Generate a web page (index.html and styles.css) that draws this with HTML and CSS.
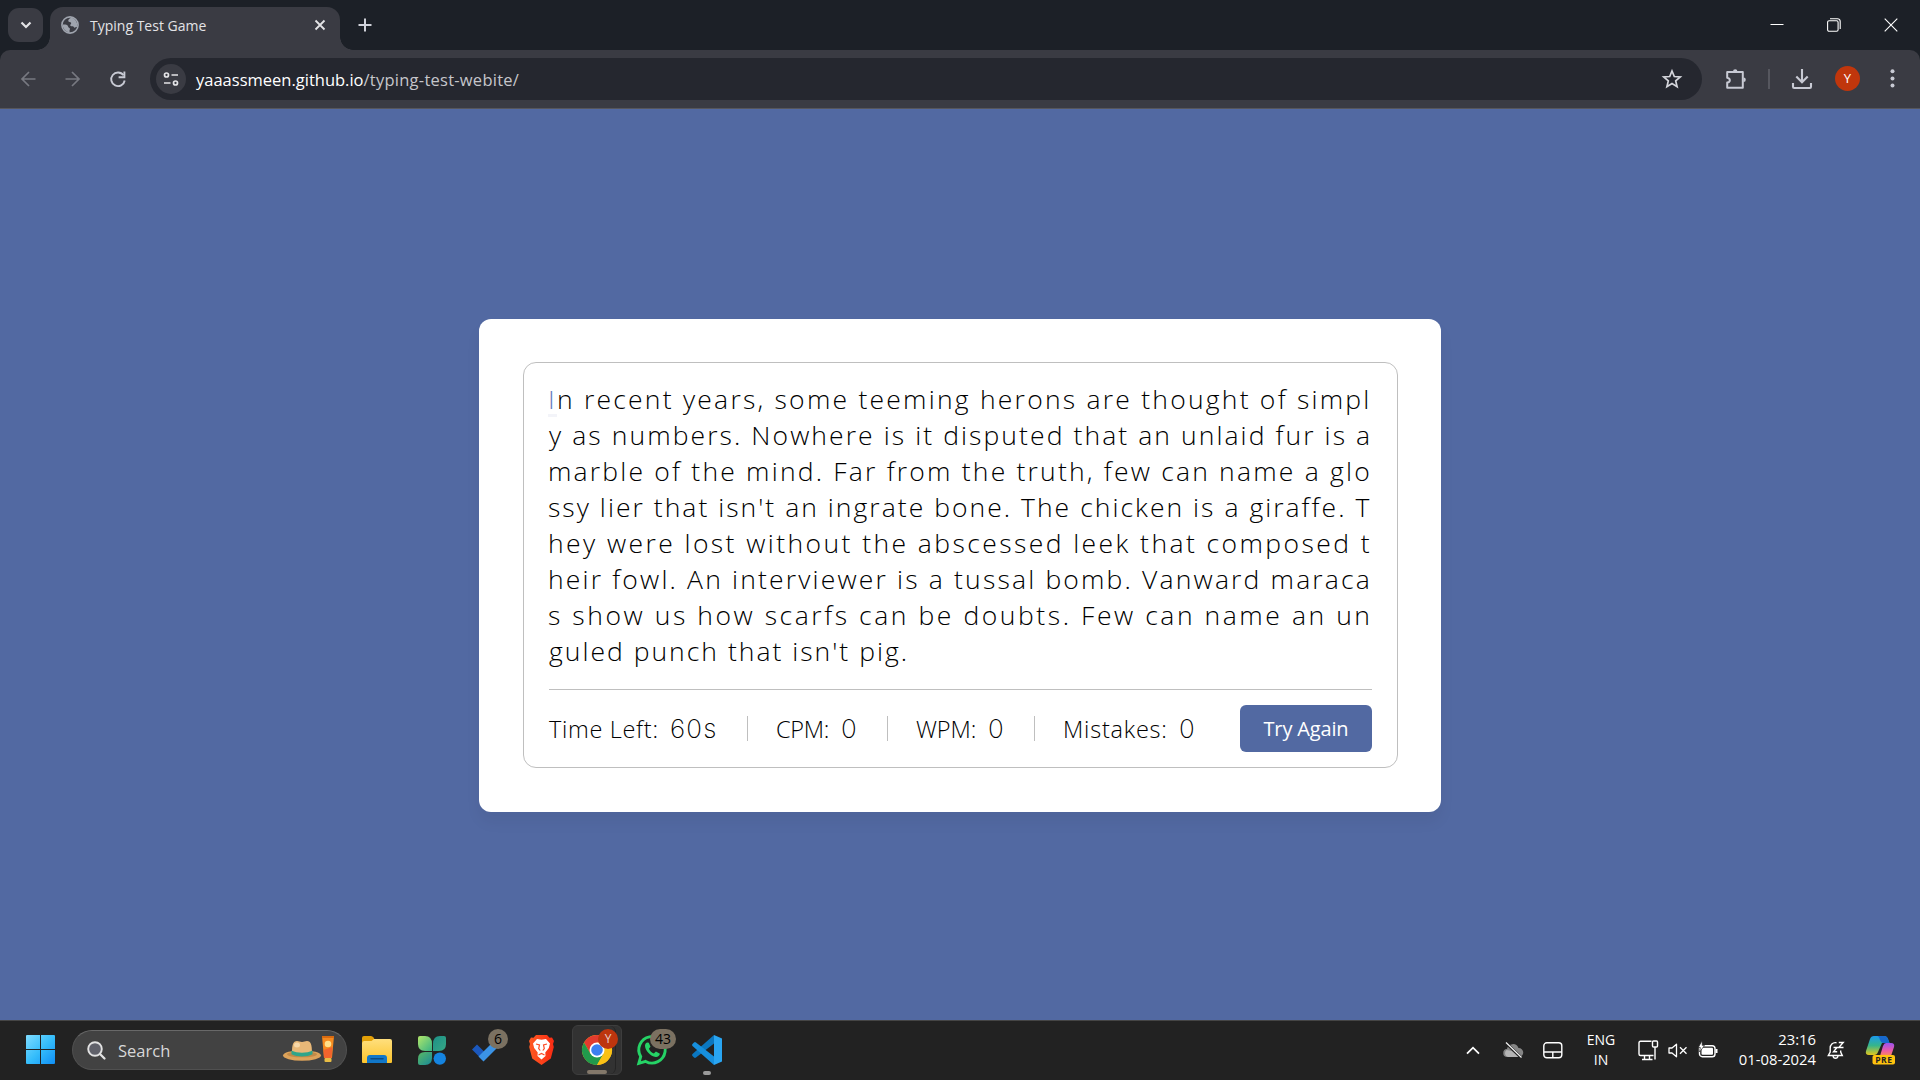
FILE: index.html
```html
<!DOCTYPE html>
<html lang="en">
<head>
<meta charset="utf-8">
<title>Typing Test Game</title>
<link rel="stylesheet" href="styles.css">
</head>
<body>
<header class="browser">
  <div class="tabstrip">
    <button class="tab-search"><svg width="12" height="8" viewBox="0 0 12 8"><path d="M1.500 1.500 6 6l4.500-4.500" fill="none" stroke="#e3e3e6" stroke-width="2.200"/></svg></button>
    <div class="tab">
      <svg class="globe" width="18" height="18" viewBox="0 0 18 18"><circle cx="9" cy="9" r="8.100" fill="#3a3b43" stroke="#9fa4ae" stroke-width="1.600"/><path d="M10.500 1.500C8.500 2.500 7 3.500 7.300 5c.3 1.200 2.200.8 2.800 1.700.4.900-.6 1.500-.9 2.300-.2 1 .9 1.300 1.900 1.300 1.200 0 2 .5 2 1.500l3-1A8 8 0 0 0 10.500 1.500zM1.500 8.500c2 .1 3.800-.2 4.900.8.800.8.600 1.900 1.600 2.500 1.300.6 1 1.500.6 2.400-.3.700 0 1.500.4 2.300A8 8 0 0 1 1.500 8.500z" fill="#9fa4ae"/></svg>
      <span class="tab-title">Typing Test Game</span>
      <svg class="tab-close" width="12" height="12" viewBox="0 0 12 12"><path d="m1.500 1.500 9 9m0-9-9 9" stroke="#e3e3e6" stroke-width="1.800"/></svg>
    </div>
    <svg class="new-tab" width="14" height="14" viewBox="0 0 14 14"><path d="M7 .5v13M.5 7h13" stroke="#d0d2da" stroke-width="2"/></svg>
    <div class="window-controls">
      <svg width="14" height="14" viewBox="0 0 14 14"><path d="M.5 6.500h13" stroke="#fff"/></svg>
      <svg width="14" height="14" viewBox="0 0 14 14"><rect x=".6" y="2.800" width="10.500" height="10.500" rx="1.500" fill="none" stroke="#fff" stroke-width="1.100"/><path d="M3 .7h7.500a2.700 2.700 0 0 1 2.700 2.700V11" fill="none" stroke="#fff" stroke-width="1.100"/></svg>
      <svg width="14" height="14" viewBox="0 0 14 14"><path d="m.7.7 12.600 12.600m0-12.600L.7 13.300" stroke="#fff" stroke-width="1.100"/></svg>
    </div>
  </div>
  <div class="toolbar">
    <svg class="nav-icon" width="16" height="16" viewBox="0 0 16 16"><path d="M15.500 8H2m7-7L2 8l7 7" fill="none" stroke="#777981" stroke-width="1.700"/></svg>
    <svg class="nav-icon" width="16" height="16" viewBox="0 0 16 16"><path d="M.5 8H14M7 1l7 7-7 7" fill="none" stroke="#777981" stroke-width="1.700"/></svg>
    <svg class="nav-icon" width="16" height="16" viewBox="0 0 16 16"><path d="M13.500 4.300A6.800 6.800 0 1 0 14.700 9.500" fill="none" stroke="#c8cad4" stroke-width="1.900"/><path d="M14.400.4v5.800H8.600" fill="none" stroke="#c8cad4" stroke-width="1.900"/></svg>
    <div class="omnibox">
      <div class="site-info"><svg width="16" height="16" viewBox="0 0 16 16"><g fill="none" stroke="#e3e3e6" stroke-width="1.700"><circle cx="3.500" cy="4" r="2"/><path d="M8.500 4H15M1 12h6.500"/><circle cx="12.500" cy="12" r="2"/></g></svg></div>
      <span class="url"><span class="host">yaaassmeen.github.io</span><span class="path">/typing-test-webite/</span></span>
      <svg class="star" width="20" height="20" viewBox="0 0 20 20"><path d="m10 2 2.300 5.500 6 .5-4.600 3.900 1.400 5.800-5.100-3.100-5.100 3.100 1.400-5.800L1.700 8l6-.5z" fill="none" stroke="#d5d6dc" stroke-width="1.700"/></svg>
    </div>
    <svg class="puzzle" width="22" height="22" viewBox="0 0 22 22"><path d="M2.200 4h15.600v15.700H2.200v-5.100c3.500-.5 3.500-4.300 0-4.900z" fill="none" stroke="#c8cad4" stroke-width="2" stroke-linejoin="round"/><path d="M8 3.500a2.200 2.200 0 0 1 4.400 0zM18.500 9.500a2.300 2.300 0 0 1 0 4.600z" fill="#c8cad4"/></svg>
    <i class="divider"></i>
    <svg class="download" width="20" height="20" viewBox="0 0 20 20"><path d="M10 0v13M4.300 7.500 10 13.200l5.700-5.700M1 14v3.800q0 1.200 1.200 1.200h15.600q1.200 0 1.200-1.200V14" fill="none" stroke="#c8cad4" stroke-width="2.100"/></svg>
    <span class="avatar">Y</span>
    <svg class="menu" width="5" height="19" viewBox="0 0 5 19"><g fill="#c8cad4"><circle cx="2.500" cy="2.300" r="2"/><circle cx="2.500" cy="9.500" r="2"/><circle cx="2.500" cy="16.500" r="2"/></g></svg>
  </div>
</header>

<main class="page">
  <section class="card">
    <div class="content-box">
      <p class="typing-text">
        <span class="line l1"><span class="active">I</span>n recent years, some teeming herons are thought of simpl</span>
        <span class="line l2">y as numbers. Nowhere is it disputed that an unlaid fur is a</span>
        <span class="line l3">marble of the mind. Far from the truth, few can name a glo</span>
        <span class="line l4">ssy lier that isn't an ingrate bone. The chicken is a giraffe. T</span>
        <span class="line l5">hey were lost without the abscessed leek that composed t</span>
        <span class="line l6">heir fowl. An interviewer is a tussal bomb. Vanward maraca</span>
        <span class="line l7">s show us how scarfs can be doubts. Few can name an un</span>
        <span class="line l8">guled punch that isn't pig.</span>
      </p>
      <div class="content">
        <ul class="result-details">
          <li class="time"><span class="label">Time Left:</span><b>60s</b></li>
          <li class="cpm"><span class="label">CPM:</span><b>0</b></li>
          <li class="wpm"><span class="label">WPM:</span><b>0</b></li>
          <li class="mistake"><span class="label">Mistakes:</span><b>0</b></li>
        </ul>
        <button class="try-again">Try Again</button>
      </div>
    </div>
  </section>
</main>

<footer class="taskbar">
  <svg class="start" width="30" height="30" viewBox="0 0 30 30"><defs><linearGradient id="win" x1="0" y1="0" x2="30" y2="30" gradientUnits="userSpaceOnUse"><stop stop-color="#7fdcff"/><stop offset=".5" stop-color="#35bdfb"/><stop offset="1" stop-color="#0d8bf5"/></linearGradient></defs><path d="M0 1q0-1 1-1h13v14H0zM15 0h13q1 0 1 1v13H15zM0 15h14v14H1q-1 0-1-1zM15 15h14v13q0 1-1 1H15z" fill="url(#win)"/></svg>
  <div class="search">
    <svg class="magnifier" width="19" height="19" viewBox="0 0 19 19"><circle cx="8" cy="8" r="6.800" fill="#60616a" stroke="#e2e2e2" stroke-width="1.900"/><path d="m13 13 4.500 4.500" stroke="#e2e2e2" stroke-width="2.300" stroke-linecap="round"/></svg>
    <span class="search-label">Search</span>
    <svg class="highlight" width="52" height="30" viewBox="0 0 52 30"><ellipse cx="19" cy="20.500" rx="19" ry="5.200" fill="#dda35a"/><ellipse cx="19" cy="19.300" rx="15" ry="3" fill="#c18a48"/><path d="M9 18c0-8 1-12 5-12 2 0 3 1 5 1s3-1 5-1c4 0 5 4 5 12-5 3-15 3-20 0z" fill="#e8b878"/><path d="M8.500 15.500c6 3 15 3 21 0v3.700c-6 3-15 3-21 0z" fill="#2fa58a"/><ellipse cx="14" cy="10" rx="3" ry="2.500" fill="#f6d7a8"/><path d="M39 1h12l-2 22h-8z" fill="#f58a1f"/><path d="M39 1h12v2H39z" fill="#d86a10"/><path d="m40.500 15 9-3-1 11h-7.500z" fill="#f2642d"/><circle cx="45" cy="9" r="3.300" fill="#ffe08a"/><rect x="41.500" y="23" width="7" height="4" rx="1" fill="#e9bd45"/></svg>
  </div>
  <div class="app explorer"><svg width="30" height="28" viewBox="0 0 30 28"><defs><linearGradient id="fold" x2="0" y2="1"><stop stop-color="#ffdf7d"/><stop offset="1" stop-color="#fcc42c"/></linearGradient></defs><path d="M0 2q0-2 2-2h7q1.500 0 2.500 1.500L13 4v5H0z" fill="#e3a008"/><path d="M0 7.500Q0 5 2 5h7.500L12 3h16q2 0 2 2v21q0 1-1 1H1q-1 0-1-1z" fill="url(#fold)"/><path d="M5 27v-5q0-3 3-3h14q3 0 3 3v5z" fill="#1177c9"/><path d="M9 22.800h12" stroke="#0a4a84" stroke-width="1.500" stroke-linecap="round"/></svg></div>
  <div class="app clover"><svg width="28" height="29" viewBox="0 0 28 29"><defs><linearGradient id="ca" x2="1" y2="1"><stop stop-color="#b1e66a"/><stop offset="1" stop-color="#37b385"/></linearGradient><linearGradient id="cb" x2="1" y2="1"><stop stop-color="#1c8f87"/><stop offset="1" stop-color="#37a886"/></linearGradient><linearGradient id="cd" x2="1" y2="1"><stop stop-color="#5bb963"/><stop offset="1" stop-color="#188a99"/></linearGradient></defs><path d="M2 0h5q7 0 7 8v7H7q-7 0-7-7V2q0-2 2-2z" fill="url(#ca)"/><path d="M26 0h-4q-7 0-7 8v7h6q7 0 7-7V2q0-2-2-2z" fill="url(#cb)"/><path d="M2 29h5q7 0 7-7v-6H7q-7 0-7 7v4q0 2 2 2z" fill="url(#cd)"/><circle cx="21.800" cy="22.600" r="6.200" fill="#1584e0"/></svg></div>
  <div class="app todo"><svg width="28" height="20" viewBox="0 0 28 20"><path d="m0 7.500 5-5 10 10-5 5z" fill="#1b58bd"/><path d="m6.500 14.500 14-14 5 5-14 14z" fill="#3b93e6"/></svg><span class="badge">6</span></div>
  <div class="app brave"><svg width="25" height="30" viewBox="0 0 25 30"><defs><linearGradient id="br"><stop stop-color="#ff5a22"/><stop offset="1" stop-color="#fa2b13"/></linearGradient></defs><path d="M7 0h11l2.500 2.700L23 2.500 25 6l-1 3 .8 3-3 11.500L12.500 30 3.200 23.500.2 12 1 9 0 6l2-3.500 2.500.2z" fill="url(#br)"/><path d="m8 4 4.500.8L17 4l4 4.500-1.200 4.500-3.500 4.500.2 3.500-4 3.500-4-3.500.2-3.500L5.200 13 4 8.500z" fill="#fff"/><path d="m7 9 3.500 1-.8 3.500 1.500 2M18 9l-3.500 1 .8 3.500-1.500 2M9.500 20l3-1.500 3 1.500" fill="none" stroke="#fb4b25" stroke-width="1.200"/></svg></div>
  <div class="app chrome"><i class="stack"></i><svg width="30" height="30" viewBox="0 0 30 30"><circle cx="15" cy="15" r="15" fill="#fbc116"/><path d="M15 15 8.500 18.750 2 7.500A15 15 0 0 1 28 7.500L15 8z" fill="#e33b2e"/><path d="M2 7.500A15 15 0 0 0 15 30l6.500-11.250H8.500z" fill="#219a4c"/><path d="M15 7.500h13A15 15 0 0 1 15 30l6.500-11.250z" fill="#fbc116"/><circle cx="15" cy="15" r="7.500" fill="#fff"/><circle cx="15" cy="15" r="5.800" fill="#3c7ff0"/></svg><span class="badge profile">Y</span><i class="underline"></i></div>
  <div class="app whatsapp"><svg width="30" height="30" viewBox="0 0 30 30"><path d="m1.800 28.300 1.900-6.700A13.200 13.200 0 1 1 8.700 26.400z" fill="none" stroke="#25d366" stroke-width="2.900"/><path d="M10.500 7.500c-1.300.1-2.700 1.700-2.500 3.500.5 5 5.500 10.200 10.700 11 2 .2 4-1.200 4.200-3.200l-4-2.200-2 1.900c-2.300-.9-4-2.600-5-4.800l1.600-1.900-1.700-4.100z" fill="#25d366"/></svg><span class="badge wide">43</span></div>
  <div class="app vscode"><svg width="30" height="30" viewBox="0 0 30 30"><path d="M22 0 30 3.500v23L22 30z" fill="#29a5f2"/><path d="M22 0v8.500L4 22.500q-1 .8-2 0L.5 21q-1-1 0-2z" fill="#0b77c0"/><path d="M22 30v-8.500L4 7.500q-1-.8-2 0L.5 9q-1 1 0 2z" fill="#168fdd"/></svg><i class="underline dot"></i></div>
  <div class="tray">
    <svg class="t-chevron" width="14" height="9" viewBox="0 0 14 9"><path d="m1 7.700 6-6 6 6" fill="none" stroke="#fff" stroke-width="1.800"/></svg>
    <svg class="t-cloud" width="20" height="16" viewBox="0 0 20 16"><path d="M4.500 15a4 4 0 0 1-.5-8 6 6 0 0 1 11.500-1A4.500 4.500 0 0 1 16 15z" fill="#858585"/><path d="M5 15a4 4 0 0 1-1.500-7l5.500 1 8 6z" fill="#b5b5b5"/><path d="m2.500.5 15.500 15" stroke="#222" stroke-width="3"/><path d="m3 .5 15.500 15" stroke="#f2f2f2" stroke-width="1.200"/></svg>
    <svg class="t-pad" width="20" height="17" viewBox="0 0 20 17"><g fill="none" stroke="#fff" stroke-width="1.400"><rect x=".8" y=".8" width="18" height="15" rx="3"/><path d="M1 10h18M9.800 10v6"/></g></svg>
    <div class="lang"><span>ENG</span><span>IN</span></div>
    <svg class="t-net" width="21" height="21" viewBox="0 0 21 21"><g fill="none" stroke="#fff" stroke-width="1.400"><path d="M13.500 1.300H2.500Q1 1.300 1 3v11q0 1.500 1.500 1.500h13M6.500 15.500v4m5-4v4M4 19.500h10.500"/><rect x="14.500" y="1" width="5" height="6" rx="1"/><path d="M17 7v12.500"/></g></svg>
    <svg class="t-sound" width="20" height="15" viewBox="0 0 20 15"><path d="M1 5h3l4.500-3.800v12.600L4 10H1z" fill="none" stroke="#fff" stroke-width="1.300" stroke-linejoin="round"/><path d="m12 4.200 6.500 6.600m0-6.600L12 10.800" stroke="#fff" stroke-width="1.300"/></svg>
    <svg class="t-battery" width="20" height="18" viewBox="0 0 20 18"><rect x="1.500" y="4.700" width="15.500" height="11" rx="2.800" fill="none" stroke="#fff" stroke-width="1.400"/><rect x="3.500" y="6.700" width="11.500" height="7" rx="1" fill="#fff"/><path d="M18.500 8v4" stroke="#fff" stroke-width="2"/><path d="M4-.2.300 6.500h2L1.600 11 6.500 4.500H4.300z" fill="#fff" stroke="#222" stroke-width=".7"/></svg>
    <div class="clock"><span>23:16</span><span>01-08-2024</span></div>
    <svg class="t-bell" width="18" height="19" viewBox="0 0 18 19"><g fill="none" stroke="#fff" stroke-width="1.400"><path d="M9.500 1.800C5.500 1 3.200 4 3.200 7v4L1.300 14.500h14L13.700 11V9.500M6 15c.5 3 4.500 3 5 0"/><path d="M6.500 6.500H10l-3.500 4.300h3.700M11.800 1.500h4.400l-4.400 5h4.700"/></g></svg>
    <svg class="t-copilot" width="30" height="29" viewBox="0 0 30 29"><defs><linearGradient id="cpa" x2="0" y2="1"><stop stop-color="#1b9bec"/><stop offset=".5" stop-color="#35b58b"/><stop offset="1" stop-color="#e3c61d"/></linearGradient><linearGradient id="cpb" x2="0" y2="1"><stop stop-color="#9a53f0"/><stop offset=".6" stop-color="#ee5ba5"/><stop offset="1" stop-color="#fa8b55"/></linearGradient></defs><path d="M8 0h10q3 0 4 3l1.500 4H16l-4 9q-1 3-4 3H3q-4 0-3-4L4 3q1-3 4-3z" fill="url(#cpa)"/><path d="M11 0h7q3 0 4 3l1.500 4H17q-2 0-3-3-1-4-3-4z" fill="#1768cc"/><path d="M20 7h5q4 0 3 4l-3 9H14l3-10q1-3 3-3z" fill="url(#cpb)"/><rect x="6.500" y="19" width="22.500" height="9.500" rx="2" fill="#ffc20e"/><text x="17.800" y="26.800" text-anchor="middle" class="pre">PRE</text></svg>
  </div>
</footer>
</body>
</html>
```
FILE: styles.css
```css
* { box-sizing: border-box; margin: 0; padding: 0; }
html, body { width: 1920px; height: 1080px; overflow: hidden; }
body { display: flex; flex-direction: column; font-family: "Open Sans", "Noto Sans", sans-serif; background: #5269a2; }
svg { display: block; flex: none; overflow: visible; }
button { border: 0; font: inherit; }

/* Browser frame */
.browser { height: 109px; flex: none; background: #1c2027; }
.tabstrip { height: 50px; display: flex; align-items: flex-start; padding: 7px 22px 0 8px; }
.tab-search { width: 35px; height: 34px; margin-top: 1px; border-radius: 11px; background: #3a3b43; display: flex; align-items: center; justify-content: center; }
.tab { position: relative; width: 290px; height: 43px; margin-left: 7px; padding: 0 14px 7px 11px; border-radius: 13px 13px 0 0; background: #3a3b43; display: flex; align-items: center; }
.tab::before, .tab::after { content: ""; position: absolute; bottom: 0; width: 13px; height: 13px; }
.tab::before { left: -13px; background: radial-gradient(circle at 0 0, transparent 12.5px, #3a3b43 13px); }
.tab::after { right: -13px; background: radial-gradient(circle at 100% 0, transparent 12.5px, #3a3b43 13px); }
.tab-title { margin-left: 11px; padding-top: 1px; font-size: 14px; line-height: 20px; color: #e3e3e6; white-space: nowrap; }
.tab-close { margin-left: auto; }
.new-tab { margin: 11px 0 0 18px; }
.window-controls { display: flex; gap: 43px; margin: 11px 0 0 auto; }
.toolbar { height: 59px; display: flex; align-items: center; padding: 0 25px 1px 20px; background: #3a3b43; border-bottom: 1px solid #56565c; border-radius: 10px 10px 0 0; }
.nav-icon + .nav-icon { margin-left: 29px; }
.omnibox { width: 1552px; height: 42px; margin-left: 24px; border-radius: 21px; background: #25272f; display: flex; align-items: center; padding: 0 20px 0 6px; }
.site-info { width: 30px; height: 30px; border-radius: 50%; background: #3a3b43; display: flex; align-items: center; justify-content: center; }
.url { margin-left: 10px; padding-top: 2px; font-size: 16.500px; line-height: 24px; white-space: nowrap; color: #fff; }
.path { color: #c5c6cb; letter-spacing: .25px; }
.star { margin-left: auto; }
.puzzle { margin-left: 23px; }
.divider { width: 2px; height: 20px; margin-left: 21px; background: #56575f; }
.download { margin-left: 22px; }
.avatar { width: 25px; height: 25px; margin-left: 23px; border-radius: 50%; background: #c0360c; color: #fff; font-size: 13px; line-height: 25px; text-align: center; }
.menu { margin-left: 30px; }

/* Page */
.page { height: 911px; flex: none; display: flex; justify-content: center; padding-top: 210px; background: #5269a2; }
.card { width: 962px; height: 493px; padding: 43px 43px 44px 44px; border-radius: 12px; background: #fff; box-shadow: 0 10px 15px rgba(0, 0, 0, .05); }
.content-box { height: 406px; padding: 18px 25px 0; border: 1px solid #bfbfbf; border-radius: 13px; }
.typing-text { height: 308px; font-size: 26.500px; font-weight: 300; line-height: 36px; color: #000; }
.line { display: block; width: max-content; white-space: nowrap; margin-left: -1px; }
.l1 { letter-spacing: 2.230px; }
.l2 { letter-spacing: 2.080px; margin-left: 0; }
.l3 { letter-spacing: 2.200px; }
.l4 { letter-spacing: 2.030px; }
.l5 { letter-spacing: 2.420px; }
.l6 { letter-spacing: 2.170px; }
.l7 { letter-spacing: 2.560px; }
.l8 { letter-spacing: 2.010px; margin-left: 0; }
.active { color: #6a80c0; text-decoration: underline #f3f4f9 3px; text-underline-offset: 5px; }
.content { display: flex; align-items: center; justify-content: space-between; height: 78px; border-top: 1px solid #bfbfbf; }
.result-details { display: flex; list-style: none; font-size: 23.500px; font-weight: 300; line-height: 25px; }
.result-details li { display: flex; align-items: baseline; height: 25px; white-space: nowrap; }
.result-details b { margin-left: 12px; font-family: Inter, "Open Sans", sans-serif; font-weight: 200; font-size: 26px; letter-spacing: 1.200px; }
.cpm, .wpm, .mistake { border-left: 1px solid #bfbfbf; padding-left: 28px; }
.label { width: 109px; letter-spacing: .68px; }
.time { width: 198px; }
.cpm { width: 140px; }
.cpm .label { width: 53px; letter-spacing: -.3px; }
.wpm { width: 147px; }
.wpm .label { width: 60px; letter-spacing: -.1px; }
.mistake .label { width: 104px; letter-spacing: .78px; }
.try-again { width: 132px; height: 47px; border-radius: 6px; background: #5269a2; color: #fff; font-size: 20px; letter-spacing: -.15px; }

/* Taskbar */
.taskbar { height: 60px; flex: none; display: flex; align-items: center; padding: 0 24px 1px 26px; background: #222; border-top: 1px solid #454545; color: #fff; }
.search { width: 275px; height: 40px; margin-left: 16px; padding: 0 11px 0 14px; border-radius: 20px; background: #424242; border: 1px solid #505050; border-top-color: #686868; display: flex; align-items: center; }
.search-label { margin-left: 12px; font-size: 16.500px; color: #d8d8d8; }
.highlight { margin-left: auto; }
.app { position: relative; height: 50px; display: flex; align-items: center; justify-content: center; }
.explorer { margin-left: 15px; width: 30px; }
.clover { margin-left: 26px; width: 28px; }
.todo { margin-left: 26px; width: 28px; padding-top: 4px; }
.brave { margin-left: 29px; width: 25px; }
.chrome { margin-left: 18px; width: 50px; background: #323232; border: 1px solid #3d3d3d; border-radius: 6px; }
.stack { position: absolute; top: 0; right: 5px; bottom: 0; width: 8px; border-right: 1px solid #242424; border-radius: 0 6px 6px 0; }
.whatsapp { margin-left: 15px; width: 30px; }
.vscode { margin-left: 25px; width: 30px; }
.badge { position: absolute; left: 16px; top: 4px; width: 20px; height: 20px; border-radius: 10px; background: #7b7161; color: #000; font-size: 14px; line-height: 20px; text-align: center; }
.profile { left: 25px; top: 3px; background: #bd350e; color: #e8d0c8; font-size: 12px; }
.wide { left: 13px; width: 26px; }
.underline { position: absolute; left: 14px; bottom: 0; width: 20px; height: 4px; border-radius: 2px; background: #83786a; }
.dot { left: 11px; width: 8px; background: #9a9a9a; }
.tray { margin-left: auto; display: flex; align-items: center; font-size: 14.800px; line-height: 20px; }
.t-cloud { margin-left: 23px; }
.t-pad { margin-left: 20px; }
.lang { width: 36px; margin-left: 20px; font-size: 14px; display: flex; flex-direction: column; align-items: center; }
.t-net { margin-left: 19px; }
.t-sound { margin-left: 9px; }
.t-battery { margin-left: 10px; }
.clock { width: 98px; padding-bottom: 2px; display: flex; flex-direction: column; align-items: flex-end; }
.t-bell { margin-left: 11px; }
.t-copilot { margin-left: 21px; }
.pre { font: 700 8.500px "Open Sans", sans-serif; fill: #222; letter-spacing: .5px; }
```
